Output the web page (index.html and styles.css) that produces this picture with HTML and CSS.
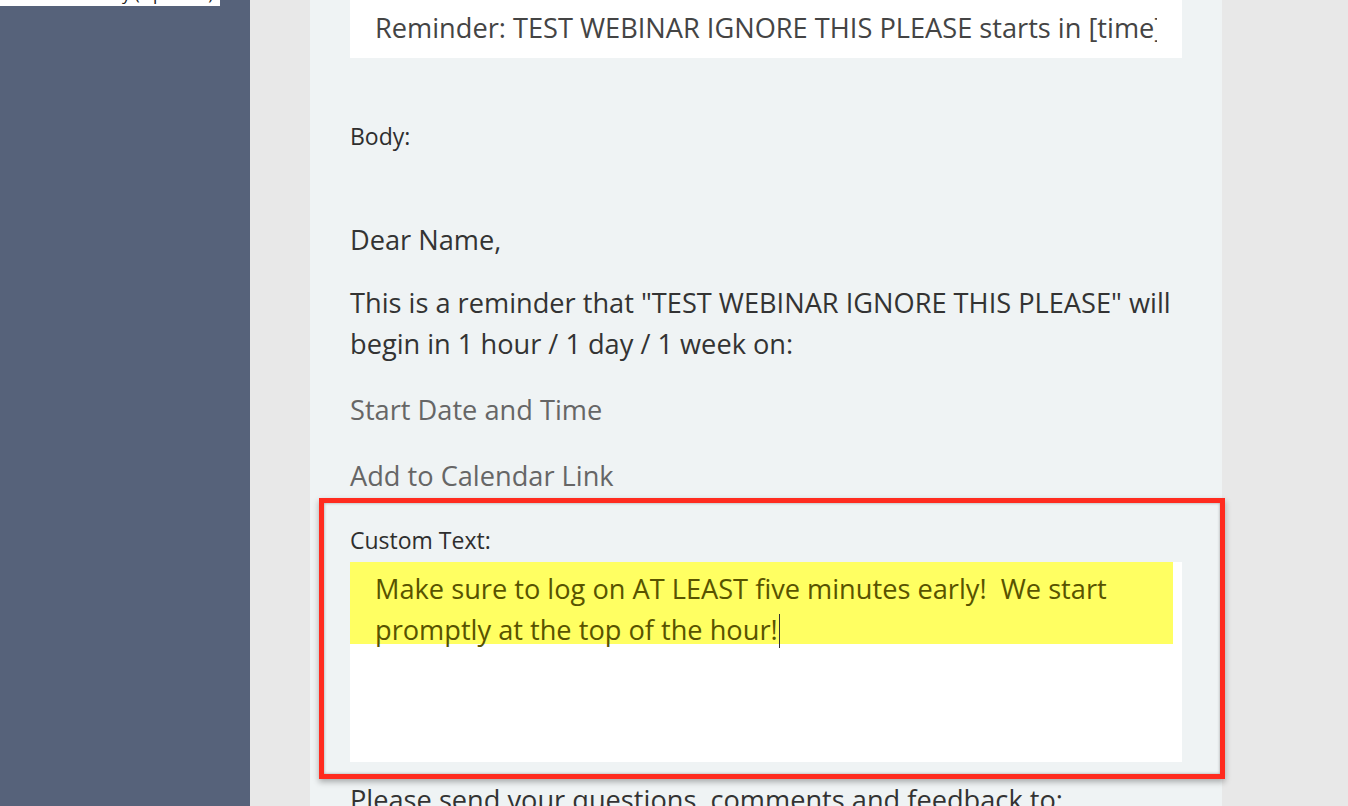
FILE: index.html
```html
<!DOCTYPE html>
<html>
<head>
<meta charset="utf-8">
<link rel="stylesheet" href="styles.css">
</head>
<body>
<div class="layout">
  <aside class="sidebar">
    <div class="sidebar-item"><span class="sidebar-text">Webinar Survey (Optional)</span></div>
  </aside>
  <main class="main">
    <section class="panel">
      <div class="subject-input"><span class="subject-value">Reminder: TEST WEBINAR IGNORE THIS PLEASE starts in [time]</span></div>
      <div class="label body-label">Body:</div>
      <p class="line greeting">Dear Name,</p>
      <p class="line para">This is a reminder that "TEST WEBINAR IGNORE THIS PLEASE" will begin in 1 hour / 1 day / 1 week on:</p>
      <p class="line muted">Start Date and Time</p>
      <p class="line muted">Add to Calendar Link</p>
      <div class="highlight-box">
        <div class="label custom-label">Custom Text:</div>
        <div class="textarea">
          <div class="selected-text">Make sure to log on AT LEAST five minutes early!&nbsp; We start promptly at the top of the hour!<span class="caret"></span></div>
        </div>
      </div>
      <p class="line footer-line">Please send your questions, comments and feedback to:</p>
    </section>
  </main>
</div>
</body>
</html>
```

FILE: styles.css
```css
html, body {
  margin: 0;
  padding: 0;
  height: 100%;
  overflow: hidden;
}

body {
  font-family: "Open Sans", "Noto Sans", sans-serif;
  color: #333;
  background: #e8e8e8;
}

.layout {
  display: grid;
  grid-template-columns: 250px 1fr;
  height: 806px;
}

.sidebar {
  background: #56627a;
}

.sidebar-item {
  width: 220px;
  height: 6px;
  background: #fff;
  overflow: hidden;
}

.sidebar-text {
  display: block;
  margin-top: -16px;
  padding-left: 6px;
  font-size: 17px;
  line-height: 20px;
  color: #222;
  white-space: nowrap;
}

.main {
  background: #e8e8e8;
  padding-left: 60px;
}

.panel {
  width: 832px;
  height: 806px;
  padding: 0 40px;
  background: #eff3f4;
}

.subject-input {
  height: 58px;
  box-sizing: border-box;
  padding: 9px 22px 0 25px;
  background: #fff;
}

.subject-value {
  display: block;
  width: 782px;
  overflow: hidden;
  white-space: nowrap;
  font-size: 27.2px;
  line-height: 38px;
  color: #444;
}

.label {
  font-size: 23px;
  line-height: 30px;
  color: #2e2e2e;
}

.body-label {
  margin-top: 63px;
}

.line {
  margin: 0;
  font-size: 27.2px;
  line-height: 41px;
  color: #333;
}

.greeting {
  margin-top: 68px;
}

.para {
  margin-top: 22px;
}

.muted {
  color: #666;
  margin-top: 25px;
}

.highlight-box {
  margin: 2px -43px 0 -31px;
  padding: 22px 38px 12px 26px;
  border: 5px solid #ff2b1f;
  box-shadow: inset 0 0 3px rgba(0, 0, 0, 0.35), 0 3px 6px rgba(0, 0, 0, 0.3);
  background: #eff3f4;
}

.custom-label {
  margin-bottom: 7px;
}

.textarea {
  height: 200px;
  background: #fff;
}

.selected-text {
  width: 823px;
  box-sizing: border-box;
  padding: 6px 20px 0 25px;
  height: 82px;
  background: #ffff62;
  font-size: 27.2px;
  line-height: 41px;
  color: #585300;
}

.caret {
  display: inline-block;
  width: 1px;
  height: 34px;
  margin-left: 1px;
  background: #333;
  vertical-align: -8px;
}

.footer-line {
  margin-top: 0;
}
```
